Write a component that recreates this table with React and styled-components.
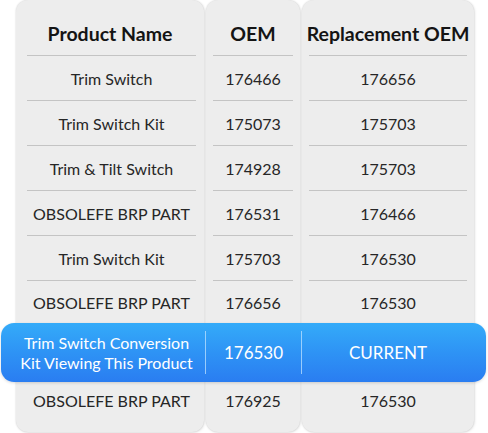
import React from 'react';
import styled, { createGlobalStyle } from 'styled-components';

const GlobalStyle = createGlobalStyle`
  html, body {
    margin: 0;
    padding: 0;
    background: #ffffff;
  }
  body {
    font-family: Lato, "Open Sans", sans-serif;
  }
`;

const Table = styled.div`
  display: grid;
  width: 488px;
  height: 433px;
  padding: 0 14px 0 16px;
  box-sizing: border-box;
  grid-template-columns: 188px 94px 172px;
  grid-template-rows: 55px repeat(5, 45px) 43px 59px 50px;
  column-gap: 2px;
`;

const Panel = styled.div`
  grid-column: ${p => p.$col};
  grid-row: 1 / -1;
  background: #ededed;
  border-radius: 12px;
  box-shadow: 0 0 2px rgba(0, 0, 0, 0.18), 1px 1px 3px rgba(0, 0, 0, 0.08);
`;

const Header = styled.div`
  grid-column: ${p => p.$col};
  grid-row: 1;
  display: flex;
  align-items: center;
  justify-content: center;
  padding-top: 12px;
  font-size: 19.5px;
  font-weight: 700;
  color: #141414;
  z-index: 1;
`;

const Cell = styled.div`
  grid-column: ${p => p.$col};
  grid-row: ${p => p.$row};
  margin: ${p => (p.$col === 1 ? '0 8px 0 11px' : '0 7px')};
  display: flex;
  align-items: center;
  justify-content: center;
  font-size: 16px;
  color: #262626;
  border-top: ${p => (p.$line ? '1px solid #c4c4c4' : 'none')};
  padding-bottom: ${p => (p.$last ? '14px' : '0')};
  z-index: 1;
`;

const Highlight = styled.div`
  grid-column: 1 / -1;
  grid-row: 8;
  margin: 0 -12px 0 -15px;
  padding: 0 12px 0 15px;
  border-radius: 13px;
  background: linear-gradient(180deg, #34abf9 0%, #2e93f5 50%, #2a7df1 100%);
  box-shadow: 0 1px 3px rgba(0, 0, 0, 0.15);
  display: grid;
  grid-template-columns: 189px 96px 1fr;
  color: #ffffff;
  z-index: 2;
`;

const HCell = styled.div`
  display: flex;
  flex-direction: column;
  align-items: center;
  justify-content: center;
  text-align: center;
  white-space: nowrap;
  margin: 8px 0;
  font-size: ${p => (p.$small ? '16px' : '17px')};
  line-height: 20px;
  border-left: ${p => (p.$divider ? '1px solid rgba(190, 225, 255, 0.75)' : 'none')};
  padding-right: ${p => (p.$shift ? '8px' : '0')};
`;

const rows = [
  ['Trim Switch', '176466', '176656'],
  ['Trim Switch Kit', '175073', '175703'],
  ['Trim & Tilt Switch', '174928', '175703'],
  ['OBSOLEFE BRP PART', '176531', '176466'],
  ['Trim Switch Kit', '175703', '176530'],
  ['OBSOLEFE BRP PART', '176656', '176530'],
];

const lastRow = ['OBSOLEFE BRP PART', '176925', '176530'];

const App = () => {
  return (
    <>
      <GlobalStyle />
      <Table>
        <Panel $col={1} />
        <Panel $col={2} />
        <Panel $col={3} />

        <Header $col={1}>Product Name</Header>
        <Header $col={2}>OEM</Header>
        <Header $col={3}>Replacement OEM</Header>

        {rows.map((r, i) =>
          r.map((text, c) => (
            <Cell key={`${i}-${c}`} $col={c + 1} $row={i + 2} $line>
              {text}
            </Cell>
          ))
        )}

        <Highlight>
          <HCell $shift $small>
            <span>Trim Switch Conversion</span>
            <span>Kit Viewing This Product</span>
          </HCell>
          <HCell $divider>176530</HCell>
          <HCell $divider>CURRENT</HCell>
        </Highlight>

        {lastRow.map((text, c) => (
          <Cell key={`last-${c}`} $col={c + 1} $row={9} $last>
            {text}
          </Cell>
        ))}
      </Table>
    </>
  );
};

export default App;
